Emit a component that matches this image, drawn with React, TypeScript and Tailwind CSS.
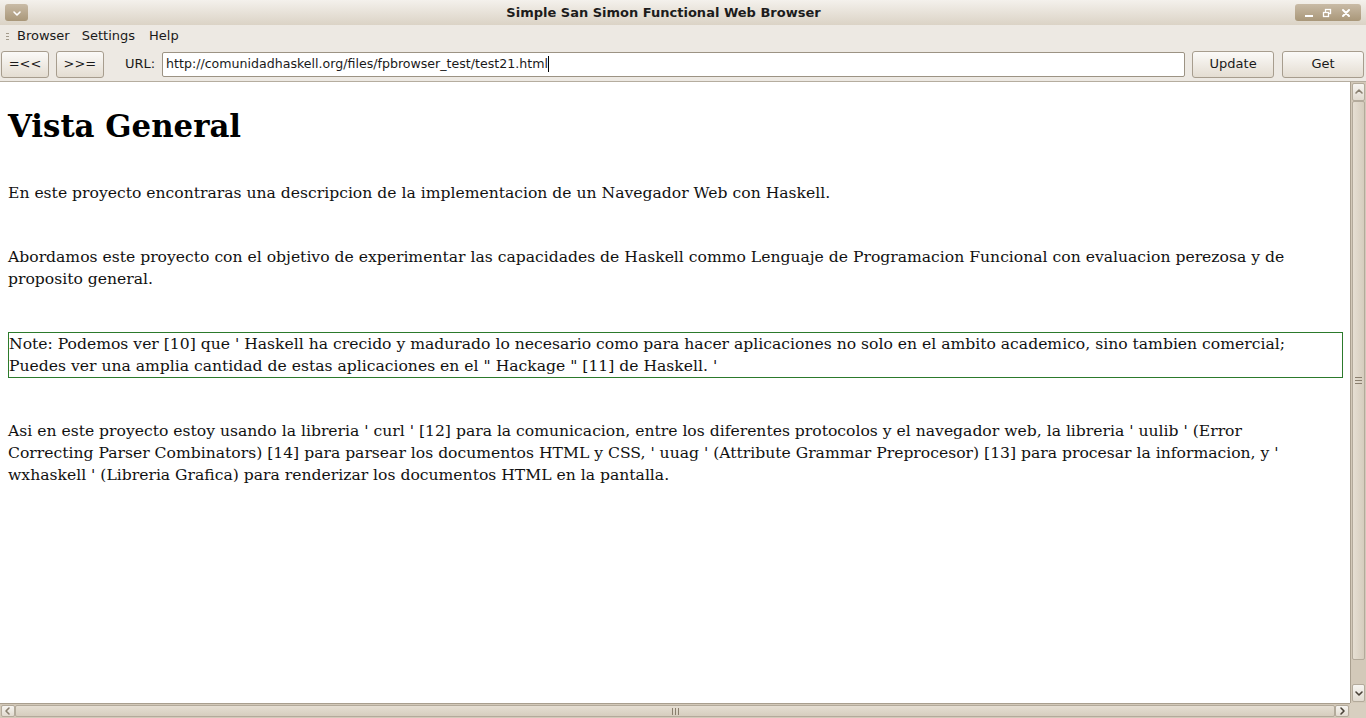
import React from "react";

const ui = { fontFamily: '"DejaVu Sans", Verdana, sans-serif' };
const serif = { fontFamily: '"DejaVu Serif", "Liberation Serif", serif' };

const Chevron = ({ dir, className }: { dir: "up" | "down" | "left" | "right"; className?: string }) => {
  const d = {
    up: "M2 6 L5 3 L8 6",
    down: "M2 4 L5 7 L8 4",
    left: "M6 2 L3 5 L6 8",
    right: "M4 2 L7 5 L4 8",
  }[dir];
  return (
    <svg width="10" height="10" viewBox="0 0 10 10" className={className}>
      <path d={d} fill="none" stroke="currentColor" strokeWidth="1.6" strokeLinecap="round" strokeLinejoin="round" />
    </svg>
  );
};

const ToolButton = ({ label, w }: { label: string; w: string }) => (
  <div
    className={`${w} h-[27px] flex items-center justify-center rounded-[3px] border border-[#a79d8e] bg-gradient-to-b from-[#fbfaf8] to-[#e4ddd2] text-[13px] text-[#1a1a1a]`}
  >
    {label}
  </div>
);

const Grip = ({ vertical }: { vertical?: boolean }) => (
  <div className={`flex ${vertical ? "flex-col" : "flex-row"} gap-[2px]`}>
    <div className={vertical ? "w-[7px] h-px bg-[#8a7f6e]" : "h-[7px] w-px bg-[#8a7f6e]"} />
    <div className={vertical ? "w-[7px] h-px bg-[#8a7f6e]" : "h-[7px] w-px bg-[#8a7f6e]"} />
    <div className={vertical ? "w-[7px] h-px bg-[#8a7f6e]" : "h-[7px] w-px bg-[#8a7f6e]"} />
  </div>
);

export default function App() {
  return (
    <div className="w-[1366px] h-[718px] overflow-hidden flex flex-col bg-[#ede9e3]" style={ui}>
      {/* title bar */}
      <div className="h-[25px] flex items-center px-[5px] bg-gradient-to-b from-[#f4f1ec] to-[#dbd3c6] relative">
        <div className="w-[23px] h-[17px] rounded-[3px] bg-gradient-to-b from-[#c9bba6] to-[#a99779] flex items-center justify-center text-white">
          <Chevron dir="down" />
        </div>
        <div className="flex-1 text-center text-[13px] font-bold text-[#1c1c1c] pl-[4px]">
          Simple San Simon Functional Web Browser
        </div>
        <div className="w-[66px] h-[17px] rounded-[3px] bg-gradient-to-b from-[#c9bba6] to-[#a99779] flex items-center justify-around px-[6px] text-white">
          <div className="w-[8px] h-[2px] bg-white mt-[7px]" />
          <svg width="10" height="10" viewBox="0 0 10 10">
            <rect x="3.5" y="1.5" width="5" height="4" fill="none" stroke="white" strokeWidth="1.3" />
            <rect x="1.5" y="4.5" width="5" height="4" fill="#b3a287" stroke="white" strokeWidth="1.3" />
          </svg>
          <svg width="10" height="10" viewBox="0 0 10 10">
            <path d="M2 2 L8 8 M8 2 L2 8" stroke="white" strokeWidth="2" strokeLinecap="round" />
          </svg>
        </div>
      </div>

      {/* menu bar */}
      <div className="h-[22px] flex items-center text-[13px] text-[#1a1a1a]">
        <div className="w-[14px] flex justify-center pl-[1px]">
          <div className="flex flex-col gap-[2px]">
            <div className="w-[3px] h-px bg-[#a39a8b]" />
            <div className="w-[3px] h-px bg-[#a39a8b]" />
            <div className="w-[3px] h-px bg-[#a39a8b]" />
          </div>
        </div>
        <div className="pl-[3px] pr-[12px]">Browser</div>
        <div className="pr-[14px]">Settings</div>
        <div>Help</div>
      </div>

      {/* toolbar */}
      <div className="h-[34px] flex items-center pl-[1px] pr-[2px] text-[13px] text-[#1a1a1a]">
        <ToolButton label="=<<" w="w-[48px]" />
        <div className="w-[7px]" />
        <ToolButton label=">>=" w="w-[48px]" />
        <div className="pl-[21px] pr-[7px]">URL:</div>
        <div className="w-[1024px] h-[25px] bg-white border border-[#9c9384] rounded-[2px] flex items-center px-[3px] text-[12.6px]">
          http://comunidadhaskell.org/files/fpbrowser_test/test21.html
          <span className="w-px h-[16px] bg-black" />
        </div>
        <div className="w-[7px]" />
        <ToolButton label="Update" w="w-[82px]" />
        <div className="w-[8px]" />
        <ToolButton label="Get" w="w-[82px]" />
      </div>

      {/* content */}
      <div className="flex-1 flex flex-col min-h-0">
        <div className="flex-1 flex min-h-0 border-t border-[#b5ad9f]">
          <div className="flex-1 bg-white overflow-hidden pl-[8px] pt-[24px] text-[#111]" style={serif}>
            <h1 className="text-[30.8px] leading-[40px] font-bold text-black">Vista General</h1>
            <p className="mt-[36px] text-[15.6px] leading-[22px] whitespace-nowrap">
              En este proyecto encontraras una descripcion de la implementacion de un Navegador Web con Haskell.
            </p>
            <p className="mt-[42px] text-[15.6px] leading-[22px] whitespace-nowrap">
              Abordamos este proyecto con el objetivo de experimentar las capacidades de Haskell commo Lenguaje de Programacion Funcional con evaluacion perezosa y de
              <br />
              proposito general.
            </p>
            <div className="mt-[42px] w-[1335px] border border-[#2c7a2c] text-[15.6px] leading-[22px] whitespace-nowrap">
              Note: Podemos ver [10] que ' Haskell ha crecido y madurado lo necesario como para hacer aplicaciones no solo en el ambito academico, sino tambien comercial;
              <br />
              Puedes ver una amplia cantidad de estas aplicaciones en el " Hackage " [11] de Haskell. '
            </div>
            <p className="mt-[42px] text-[15.6px] leading-[22px] whitespace-nowrap">
              Asi en este proyecto estoy usando la libreria ' curl ' [12] para la comunicacion, entre los diferentes protocolos y el navegador web, la libreria ' uulib ' (Error
              <br />
              Correcting Parser Combinators) [14] para parsear los documentos HTML y CSS, ' uuag ' (Attribute Grammar Preprocesor) [13] para procesar la informacion, y '
              <br />
              wxhaskell ' (Libreria Grafica) para renderizar los documentos HTML en la pantalla.
            </p>
          </div>

          {/* vertical scrollbar */}
          <div className="w-[16px] flex flex-col bg-[#d3c9b9] border-l border-[#a99f8f]">
            <div className="h-[18px] mt-[1px] mx-[1px] rounded-[2px] bg-gradient-to-b from-[#f7f5f1] to-[#e2dbd0] border border-[#b3aa9b] flex items-center justify-center text-[#8a8070]">
              <Chevron dir="up" />
            </div>
            <div className="flex-1 mx-[1px] mb-[24px] rounded-[2px] bg-gradient-to-r from-[#e6dfd3] to-[#d6cdbe] border border-[#b3aa9b] flex items-center justify-center">
              <Grip vertical />
            </div>
            <div className="h-[18px] mb-[1px] mx-[1px] rounded-[2px] bg-gradient-to-b from-[#f7f5f1] to-[#e2dbd0] border border-[#b3aa9b] flex items-center justify-center text-[#4a4238]">
              <Chevron dir="down" />
            </div>
          </div>
        </div>

        {/* horizontal scrollbar */}
        <div className="h-[15px] flex">
          <div className="flex-1 flex bg-[#d3c9b9] border-t border-[#a99f8f]">
            <div className="w-[14px] my-[1px] ml-[1px] rounded-[2px] bg-gradient-to-b from-[#f7f5f1] to-[#e2dbd0] border border-[#b3aa9b] flex items-center justify-center text-[#8a8070]">
              <Chevron dir="left" />
            </div>
            <div className="flex-1 my-[1px] rounded-[2px] bg-gradient-to-b from-[#e6dfd3] to-[#d6cdbe] border border-[#b3aa9b] flex items-center justify-center">
              <Grip />
            </div>
            <div className="w-[14px] my-[1px] mr-[1px] rounded-[2px] bg-gradient-to-b from-[#f7f5f1] to-[#e2dbd0] border border-[#b3aa9b] flex items-center justify-center text-[#4a4238]">
              <Chevron dir="right" />
            </div>
          </div>
          <div className="w-[16px] bg-[#d8cfc0]" />
        </div>
      </div>
    </div>
  );
}
